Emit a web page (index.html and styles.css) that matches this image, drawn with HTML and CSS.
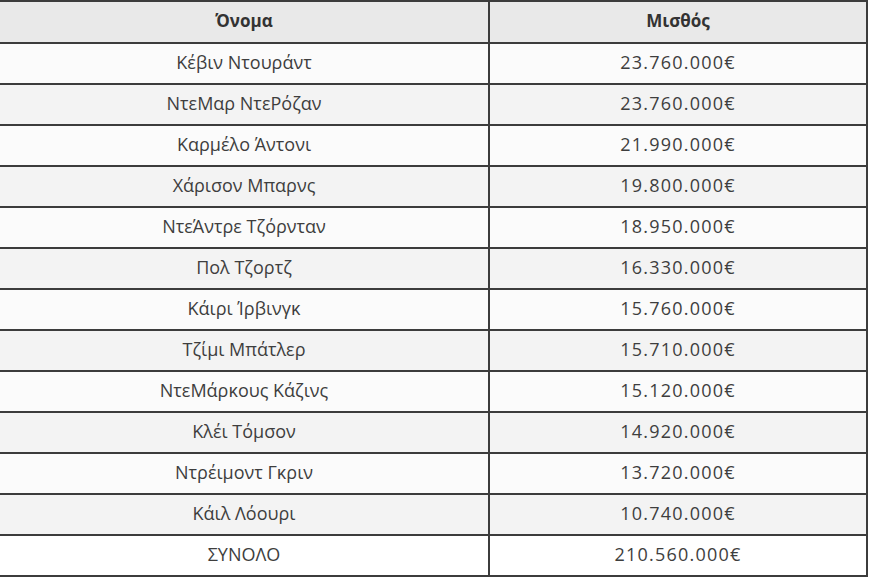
FILE: index.html
```html
<!DOCTYPE html>
<html lang="el">
<head>
<meta charset="utf-8">
<title>Μισθοί</title>
<link rel="stylesheet" href="styles.css">
</head>
<body>
<table class="salaries">
  <colgroup><col class="col-name"><col class="col-pay"></colgroup>
  <thead>
    <tr><th>Όνομα</th><th>Μισθός</th></tr>
  </thead>
  <tbody>
    <tr><td>Κέβιν Ντουράντ</td><td class="pay">23.760.000€</td></tr>
    <tr><td>ΝτεΜαρ ΝτεΡόζαν</td><td class="pay">23.760.000€</td></tr>
    <tr><td>Καρμέλο Άντονι</td><td class="pay">21.990.000€</td></tr>
    <tr><td>Χάρισον Μπαρνς</td><td class="pay">19.800.000€</td></tr>
    <tr><td>ΝτεΆντρε Τζόρνταν</td><td class="pay">18.950.000€</td></tr>
    <tr><td>Πολ Τζορτζ</td><td class="pay">16.330.000€</td></tr>
    <tr><td>Κάιρι Ίρβινγκ</td><td class="pay">15.760.000€</td></tr>
    <tr><td>Τζίμι Μπάτλερ</td><td class="pay">15.710.000€</td></tr>
    <tr><td>ΝτεΜάρκους Κάζινς</td><td class="pay">15.120.000€</td></tr>
    <tr><td>Κλέι Τόμσον</td><td class="pay">14.920.000€</td></tr>
    <tr><td>Ντρέιμοντ Γκριν</td><td class="pay">13.720.000€</td></tr>
    <tr><td>Κάιλ Λόουρι</td><td class="pay">10.740.000€</td></tr>
    <tr><td>ΣΥΝΟΛΟ</td><td class="pay">210.560.000€</td></tr>
  </tbody>
</table>
</body>
</html>
```
FILE: styles.css
```css
html, body {
  margin: 0;
  padding: 0;
  background: #ffffff;
}
body {
  font-family: "Open Sans", "Noto Sans", sans-serif;
  color: #3e3e3e;
}
.salaries {
  border-collapse: separate;
  border-spacing: 0;
  table-layout: fixed;
  width: 868px;
  border-top: 2px solid #3c3c3c;
  border-right: 2px solid #3c3c3c;
}
.col-name { width: 490px; }
.salaries th,
.salaries td {
  padding: 0;
  text-align: center;
  border-bottom: 2px solid #3c3c3c;
  line-height: 20px;
  vertical-align: middle;
}
.salaries th:first-child,
.salaries td:first-child {
  border-right: 2px solid #3c3c3c;
}
.salaries th {
  height: 38px;
  padding-bottom: 2px;
  background: #e9e9e9;
  font-size: 17px;
  font-weight: 700;
  color: #333333;
}
.salaries td {
  height: 35px;
  padding-bottom: 4px;
  background: #fbfbfb;
  font-size: 18px;
}
.salaries td.pay {
  letter-spacing: 1.2px;
}
.salaries tbody tr:nth-child(even) td {
  background: #f3f3f3;
}
.salaries tbody tr:last-child td {
  background: #ffffff;
}
```
